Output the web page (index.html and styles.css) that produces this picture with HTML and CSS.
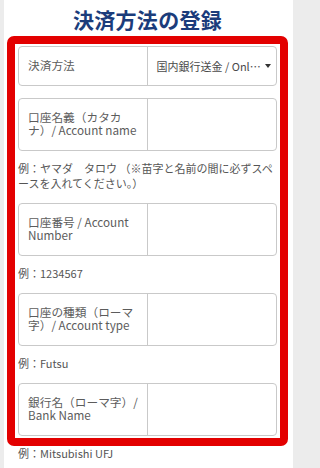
FILE: index.html
```html
<!DOCTYPE html>
<html lang="ja">
<head>
<meta charset="utf-8">
<title>決済方法の登録</title>
<link rel="stylesheet" href="styles.css">
</head>
<body>
<main class="page">
  <h1 class="title">決済方法の登録</h1>
  <form class="form">
    <div class="field field-first">
      <div class="label">決済方法</div>
      <div class="control select">
        <span class="select-text">国内銀行送金 / Onl⋯</span>
        <span class="caret"></span>
      </div>
    </div>

    <div class="field">
      <div class="label">口座名義（カタカナ）/ Account name</div>
      <div class="control"></div>
    </div>
    <p class="hint">例：ヤマダ　タロウ （※苗字と名前の間に必ずスペースを入れてください。）</p>

    <div class="field">
      <div class="label">口座番号 / Account Number</div>
      <div class="control"></div>
    </div>
    <p class="hint">例：1234567</p>

    <div class="field">
      <div class="label">口座の種類（ローマ字）/ Account type</div>
      <div class="control"></div>
    </div>
    <p class="hint">例：Futsu</p>

    <div class="field">
      <div class="label">銀行名（ローマ字）/ Bank Name</div>
      <div class="control"></div>
    </div>
    <p class="hint">例：Mitsubishi UFJ</p>
  </form>
</main>
<div class="highlight"></div>
</body>
</html>
```

FILE: styles.css
```css
html, body {
  margin: 0;
  padding: 0;
  height: 468px;
  overflow: hidden;
}

body {
  background: #ececec;
  font-family: "Noto Sans CJK JP", "Noto Sans", sans-serif;
  position: relative;
}

.page {
  margin-left: 4px;
  width: 289px;
  min-height: 468px;
  box-sizing: border-box;
  background: #ffffff;
  padding: 6px 16px 0 14px;
}

.title {
  margin: 0;
  text-align: center;
  font-size: 21px;
  line-height: 27px;
  font-weight: 700;
  color: #1b3c7b;
  letter-spacing: 0.3px;
}

.form {
  margin-top: 12.5px;
}

.field {
  display: flex;
  border: 1px solid #c9c9c9;
  border-radius: 4px;
  background: #fff;
}

.field-first {
  margin-bottom: 12px;
}

.label {
  width: 50%;
  box-sizing: border-box;
  padding: 12px 6px 14px 9px;
  border-right: 1px solid #c9c9c9;
  font-size: 11.7px;
  line-height: 12.5px;
  color: #5c5c5c;
}

.control {
  flex: 1;
  min-width: 0;
}

.select {
  display: flex;
  align-items: center;
  justify-content: space-between;
  padding: 0 5px 0 9px;
}

.select-text {
  white-space: nowrap;
  font-size: 11px;
  color: #4a4a4a;
}

.caret {
  width: 0;
  height: 0;
  border-left: 3.5px solid transparent;
  border-right: 3.5px solid transparent;
  border-top: 4px solid #333;
}

.hint {
  margin: 10px 0 12px;
  font-size: 11px;
  line-height: 15px;
  color: #555;
}

.highlight {
  position: absolute;
  left: 7px;
  top: 36px;
  width: 281px;
  height: 410px;
  box-sizing: border-box;
  border: 8.5px solid #e30000;
  border-radius: 7px;
  pointer-events: none;
}
```
